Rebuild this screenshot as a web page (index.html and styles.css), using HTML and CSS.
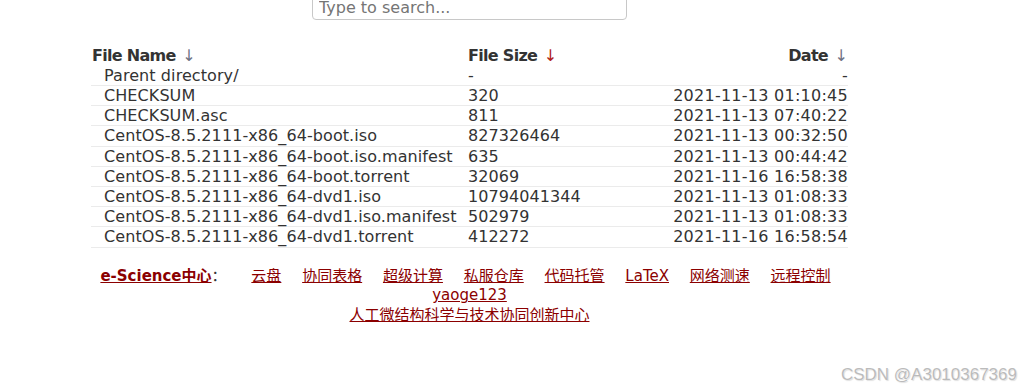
FILE: index.html
```html
<!DOCTYPE html>
<html lang="en">
<head>
  <meta charset="UTF-8">
  <meta name="viewport" content="width=device-width, initial-scale=1.0">
  <title>Index of /centos/8.5.2111/isos/x86_64/</title>
  <link rel="stylesheet" href="styles.css">
</head>
<body>
  <div id="container">
    <input type="text" id="search" placeholder="Type to search...">

    <table id="list">
      <thead>
        <tr>
          <th class="name"><span class="label">File Name</span> <span class="arrow">↓</span></th>
          <th class="size"><span class="label">File Size</span> <span class="arrow active">↓</span></th>
          <th class="date"><span class="label">Date</span> <span class="arrow">↓</span></th>
        </tr>
      </thead>
      <tbody>
        <tr><td class="name">Parent directory/</td><td class="size">-</td><td class="date">-</td></tr>
        <tr><td class="name">CHECKSUM</td><td class="size">320</td><td class="date">2021-11-13 01:10:45</td></tr>
        <tr><td class="name">CHECKSUM.asc</td><td class="size">811</td><td class="date">2021-11-13 07:40:22</td></tr>
        <tr><td class="name">CentOS-8.5.2111-x86_64-boot.iso</td><td class="size">827326464</td><td class="date">2021-11-13 00:32:50</td></tr>
        <tr><td class="name">CentOS-8.5.2111-x86_64-boot.iso.manifest</td><td class="size">635</td><td class="date">2021-11-13 00:44:42</td></tr>
        <tr><td class="name">CentOS-8.5.2111-x86_64-boot.torrent</td><td class="size">32069</td><td class="date">2021-11-16 16:58:38</td></tr>
        <tr><td class="name">CentOS-8.5.2111-x86_64-dvd1.iso</td><td class="size">10794041344</td><td class="date">2021-11-13 01:08:33</td></tr>
        <tr><td class="name">CentOS-8.5.2111-x86_64-dvd1.iso.manifest</td><td class="size">502979</td><td class="date">2021-11-13 01:08:33</td></tr>
        <tr><td class="name">CentOS-8.5.2111-x86_64-dvd1.torrent</td><td class="size">412272</td><td class="date">2021-11-16 16:58:54</td></tr>
      </tbody>
    </table>

    <div class="footer">
      <p class="links">
        <a href="#" class="brand">e-Science中心</a><span class="colon">：</span>
        <a href="#">云盘</a>
        <a href="#">协同表格</a>
        <a href="#">超级计算</a>
        <a href="#">私服仓库</a>
        <a href="#">代码托管</a>
        <a href="#">LaTeX</a>
        <a href="#">网络测速</a>
        <a href="#">远程控制</a>
      </p>
      <p><a href="#">yaoge123</a></p>
      <p><a href="#">人工微结构科学与技术协同创新中心</a></p>
    </div>
  </div>
  <div class="watermark">CSDN @A3010367369</div>
</body>
</html>
```

FILE: styles.css
```css
/* General Reset */
* {
  margin: 0;
  padding: 0;
  box-sizing: border-box;
}

body {
  background: #ffffff;
  color: #333;
  font-family: "DejaVu Sans", Verdana, "Noto Sans CJK SC", sans-serif;
  font-size: 16px;
  overflow: hidden;
  height: 391px;
  position: relative;
}

#container {
  width: 757px;
  margin-left: 91px;
}

#search {
  display: block;
  width: 315px;
  height: 30px;
  margin: -10px auto 0;
  padding: 4px 6px 0;
  border: 1px solid #c8c8c8;
  border-radius: 4px;
  font-family: inherit;
  font-size: 16px;
  color: #333;
}

#search::placeholder {
  color: #757575;
}

#list {
  width: 100%;
  border-collapse: collapse;
  margin-top: 26px;
}

th {
  font-weight: bold;
  line-height: 20px;
  text-align: left;
  white-space: nowrap;
}

th .label {
  letter-spacing: -0.7px;
}

td {
  line-height: 19.2px;
  border-bottom: 1px solid #ebebeb;
  white-space: nowrap;
  letter-spacing: 0.08px;
}

td.date {
  letter-spacing: 0.26px;
}

tbody tr:first-child td {
  line-height: 19px;
}

th.name {
  width: 377px;
  padding-left: 1px;
}

td.name {
  padding-left: 13px;
}

.size {
  width: 200px;
}

.date {
  text-align: right;
}

.arrow {
  color: #6f7385;
  font-weight: normal;
  margin-left: 1px;
}

.arrow.active {
  color: #b02020;
}

.footer {
  margin-top: 19px;
  text-align: center;
  font-size: 15px;
}

.footer p {
  line-height: 19.5px;
}

.footer a {
  color: #8b0000;
  text-decoration: underline;
}

.links a {
  margin: 0 8px;
}

.links a.brand {
  font-weight: bold;
  margin: 0;
}

.links .colon {
  color: #333;
  margin-right: 12px;
}

.watermark {
  position: absolute;
  right: 16px;
  bottom: 6px;
  font-family: "Liberation Sans", Arial, sans-serif;
  font-size: 17px;
  color: #bbb;
  text-shadow: 0 0 1px #fff, 1px 1px 1px #ddd;
}
```
